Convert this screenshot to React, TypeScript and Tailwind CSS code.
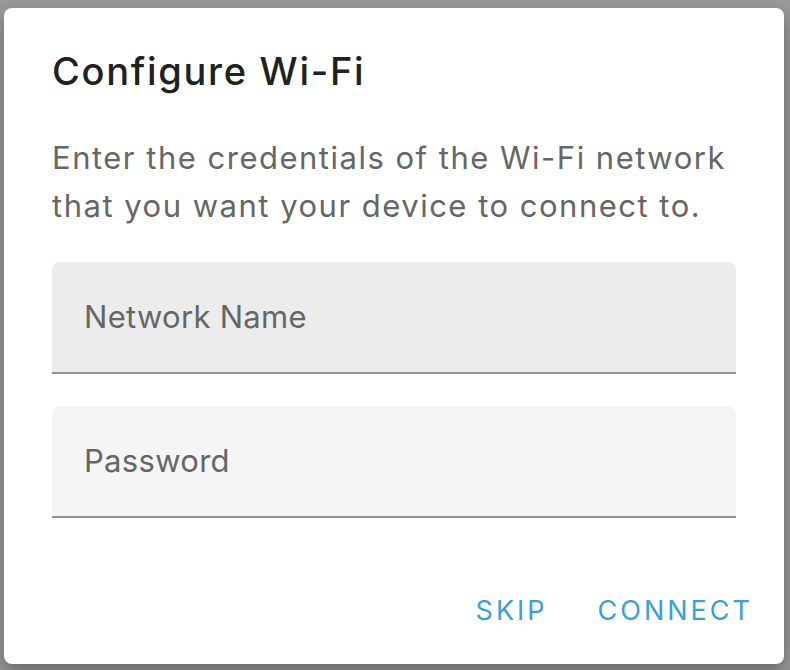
import React from 'react';

const font = { fontFamily: 'Inter, Roboto, "Noto Sans", sans-serif' };

function Field({ label, bg }: { label: string; bg: string }) {
  return (
    <div className={`h-[112px] rounded-t-[8px] border-b-2 border-[#949494] flex items-center px-8 ${bg}`}>
      <span className="text-[31px] text-[#666666] tracking-[0.3px]">{label}</span>
    </div>
  );
}

export default function App() {
  return (
    <div className="w-[790px] h-[670px] bg-[#9a9a9c] pt-2 pl-1 overflow-hidden" style={font}>
      <div className="w-[780px] h-[656px] bg-white rounded-[8px] shadow-[0_8px_20px_rgba(0,0,0,0.35)] flex flex-col">
        <div className="px-12 pt-8 h-[94px] flex items-center">
          <h1 className="text-[38px] font-medium text-[#212121] leading-[64px] tracking-[1.7px]">Configure Wi-Fi</h1>
        </div>
        <div className="px-12 pt-[32px]">
          <p className="text-[31px] leading-[48px] text-[#666666] tracking-[1.5px]">
            Enter the credentials of the Wi-Fi network
            <br />
            that you want your device to connect to.
          </p>
          <div className="mt-8 flex flex-col gap-8">
            <Field label="Network Name" bg="bg-[#ececec]" />
            <Field label="Password" bg="bg-[#f5f5f5]" />
          </div>
        </div>
        <div className="mt-auto flex justify-end items-center gap-[6px] pr-[15px] pb-[17px]">
          <button className="h-[72px] min-w-[128px] px-4 text-[27px] font-normal text-[#3a9fdc] tracking-[3px] uppercase">
            Skip
          </button>
          <button className="h-[72px] min-w-[128px] px-4 text-[27px] font-normal text-[#3a9fdc] tracking-[3px] uppercase">
            Connect
          </button>
        </div>
      </div>
    </div>
  );
}
